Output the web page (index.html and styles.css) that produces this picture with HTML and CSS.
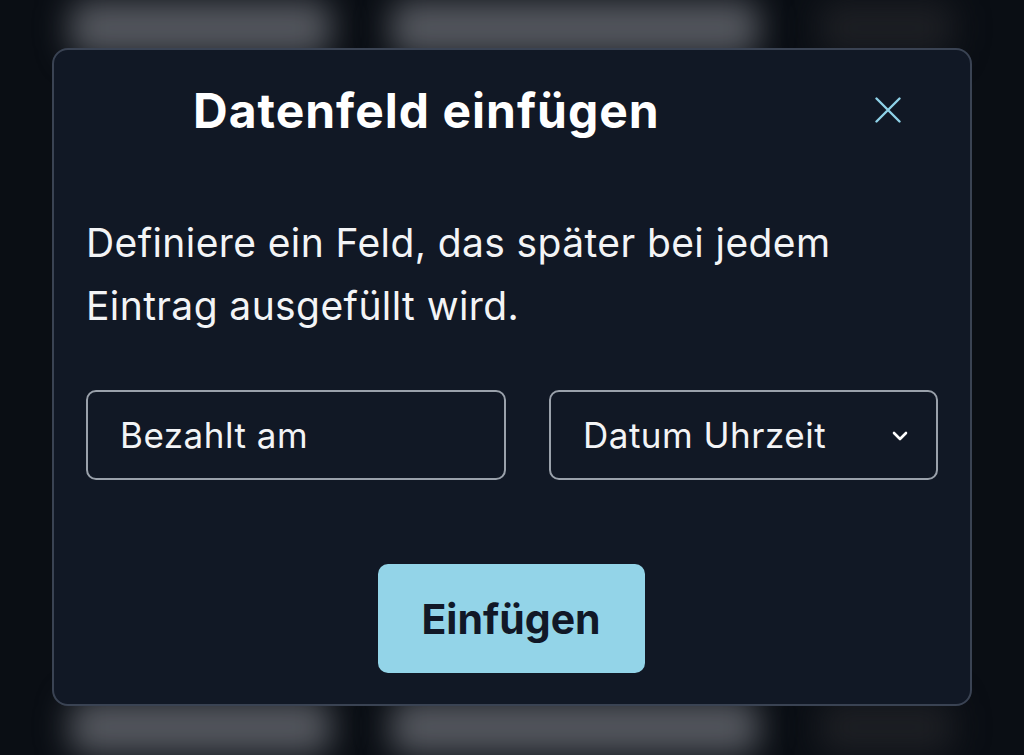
FILE: index.html
```html
<!DOCTYPE html>
<html lang="de">
<head>
<meta charset="utf-8">
<title>Datenfeld einfügen</title>
<link rel="stylesheet" href="styles.css">
</head>
<body>
<div class="backdrop">
  <div class="ghost-row top">
    <div class="ghost g1"></div>
    <div class="ghost g2"></div>
    <div class="ghost g3"></div>
  </div>
  <div class="ghost-row bottom">
    <div class="ghost g1"></div>
    <div class="ghost g2"></div>
    <div class="ghost g3"></div>
  </div>
</div>
<div class="overlay">
  <div class="dialog" role="dialog" aria-labelledby="dlg-title">
    <div class="dialog-header">
      <h2 class="dialog-title" id="dlg-title">Datenfeld einfügen</h2>
      <button class="close-btn" aria-label="Schließen">
        <svg width="26" height="26" viewBox="0 0 26 26"><path d="M1.5 1.5 L24.5 24.5 M24.5 1.5 L1.5 24.5" stroke="#8fd2e8" stroke-width="2.4" stroke-linecap="round" fill="none"/></svg>
      </button>
    </div>
    <p class="dialog-text">Definiere ein Feld, das später bei jedem Eintrag ausgefüllt wird.</p>
    <div class="field-row">
      <div class="field input">Bezahlt am</div>
      <div class="field select">
        <span>Datum Uhrzeit</span>
        <svg class="chevron" width="16" height="10" viewBox="0 0 16 10"><path d="M2 2 L8 8 L14 2" stroke="#ffffff" stroke-width="2.6" stroke-linecap="round" stroke-linejoin="round" fill="none"/></svg>
      </div>
    </div>
    <div class="actions">
      <button class="primary-btn">Einfügen</button>
    </div>
  </div>
</div>
</body>
</html>
```

FILE: styles.css
```css
html, body {
  margin: 0;
  padding: 0;
}
body {
  width: 1024px;
  height: 755px;
  background: #0a0e14;
  font-family: Inter, "Noto Sans", sans-serif;
  position: relative;
  overflow: hidden;
}
.backdrop {
  position: absolute;
  inset: 0;
  overflow: hidden;
  display: flex;
  flex-direction: column;
  justify-content: space-between;
}
.ghost-row {
  display: flex;
  height: 56px;
  padding: 0 70px;
  gap: 60px;
}
.ghost {
  height: 100%;
  border-radius: 16px;
  background: #54575e;
  filter: blur(16px);
}
.g1 { width: 270px; }
.g2 { width: 380px; }
.g3 { width: 140px; background: #1c1e23; }
.overlay {
  position: relative;
  padding: 48px 52px 0 52px;
}
.dialog {
  box-sizing: border-box;
  width: 920px;
  height: 658px;
  background: #111825;
  border: 2px solid #3a4353;
  border-radius: 16px;
  padding: 35px 32px 0 32px;
  display: flex;
  flex-direction: column;
}
.dialog-header {
  display: flex;
  align-items: center;
  height: 52px;
}
.dialog-title {
  margin: 0 0 0 107px;
  font-size: 48px;
  line-height: 52px;
  letter-spacing: 1px;
  font-weight: 700;
  color: #ffffff;
  flex: 1;
  white-space: nowrap;
}
.close-btn {
  width: 48px;
  height: 48px;
  margin-right: 26px;
  margin-top: -2px;
  border: 0;
  background: transparent;
  padding: 0;
  display: flex;
  align-items: center;
  justify-content: center;
}
.dialog-text {
  margin: 75px 0 0 0;
  font-size: 39px;
  line-height: 62.5px;
  letter-spacing: 0.4px;
  color: #f3f4f6;
  max-width: 800px;
}
.field-row {
  margin-top: 53px;
  display: grid;
  grid-template-columns: 420px 389px;
  gap: 43px;
}
.field {
  box-sizing: border-box;
  height: 90px;
  border: 2px solid #9aa1ab;
  border-radius: 10px;
  padding: 0 32px;
  display: flex;
  align-items: center;
  font-size: 35px;
  letter-spacing: 0.5px;
  color: #f3f4f6;
}
.select {
  justify-content: space-between;
  padding-right: 28px;
}
.chevron { margin-top: 2px; }
.actions {
  margin-top: 84px;
  display: flex;
  justify-content: center;
}
.primary-btn {
  width: 267px;
  height: 109px;
  border: 0;
  border-radius: 10px;
  background: #93d4e8;
  color: #111827;
  font-family: Inter, "Noto Sans", sans-serif;
  font-size: 41px;
  font-weight: 700;
  margin-left: -2px;
}
```
